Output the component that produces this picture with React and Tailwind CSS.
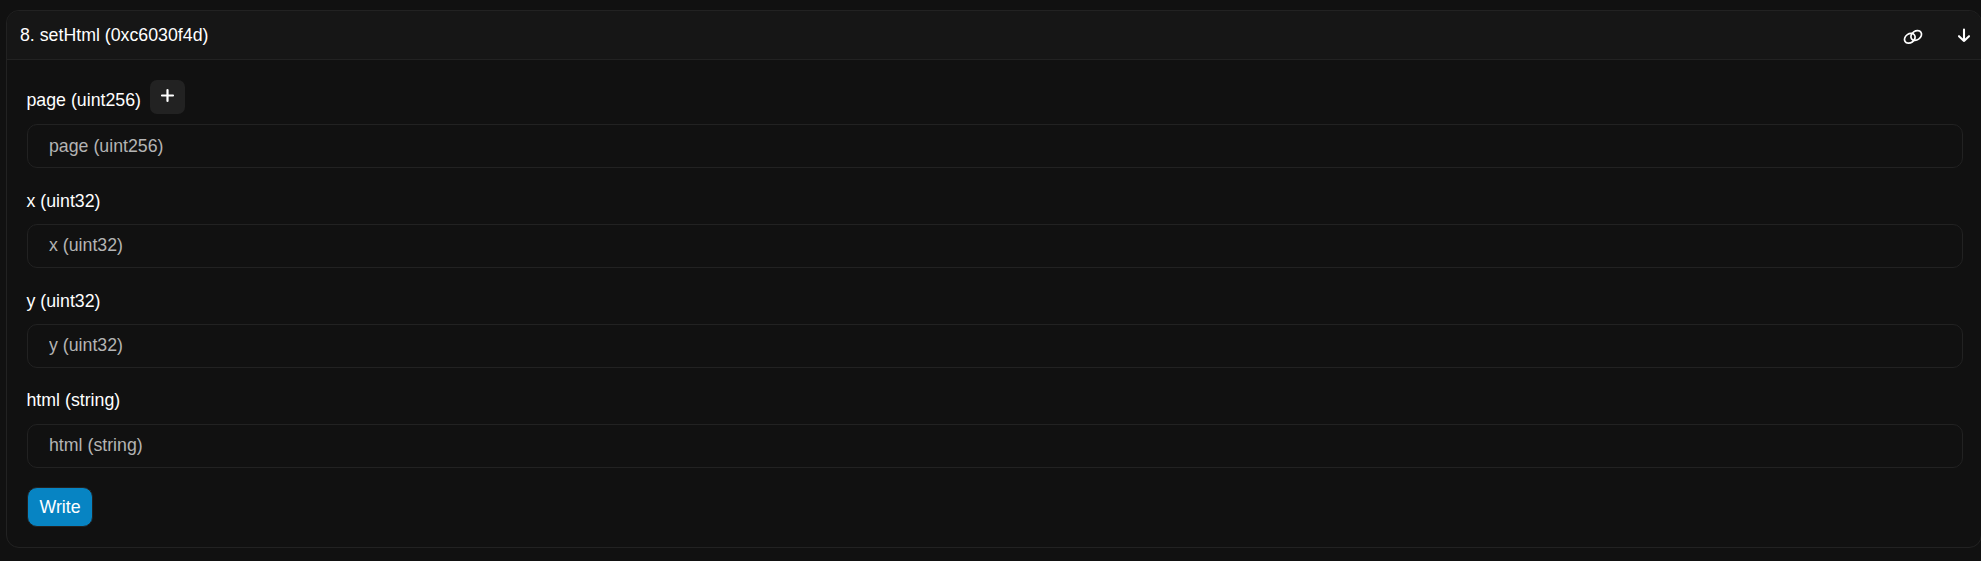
const fields = [
  { name: "page (uint256)", expandable: true, labelClass: "pt-[7px]", inputClass: "pb-0" },
  { name: "x (uint32)", labelClass: "pt-[4px]", inputClass: "pb-[2px]" },
  { name: "y (uint32)", labelClass: "pt-[4px]", inputClass: "pb-[2px]" },
  { name: "html (string)", labelClass: "pt-[3px]", inputClass: "pb-[2px]" },
];

function LinkIcon() {
  return (
    <svg className="mt-[4px]" width="20" height="16" viewBox="0 0 20 16" fill="none" stroke="#fff" strokeWidth="1.7">
      <ellipse cx="6.8" cy="9.3" rx="5.7" ry="4.4" transform="rotate(-34 6.8 9.3)" />
      <ellipse cx="13.2" cy="6.5" rx="5.7" ry="4.4" transform="rotate(-34 13.2 6.5)" />
    </svg>
  );
}

function ArrowDownIcon() {
  return (
    <svg className="mt-px" width="14" height="15" viewBox="0 0 14 15" fill="none" stroke="#fff" strokeWidth="2.1" strokeLinecap="round" strokeLinejoin="round">
      <path d="M7 1.5V13M2 8.2L7 13L12 8.2" />
    </svg>
  );
}

function Field({ name, expandable, labelClass, inputClass }) {
  return (
    <div className="mb-4 flex flex-col">
      <div className={expandable ? "mb-2.5 flex h-[34px] items-start" : "mb-2.5 flex h-[30px] items-start"}>
        <label className={`-ml-[0.5px] w-[123px] ${labelClass}`}>{name}</label>
        {expandable && (
          <button aria-label="Add" className="ml-[0.5px] flex h-[34px] w-[35px] items-center justify-center rounded-[7px] bg-[#222]">
            <svg width="15" height="15" viewBox="0 0 15 15" className="-mt-[3px]" stroke="#fff" strokeWidth="2.2" strokeLinecap="round">
              <path d="M7.5 2V13M2 7.5H13" />
            </svg>
          </button>
        )}
      </div>
      <input
        placeholder={name}
        className={`h-11 w-full rounded-[10px] border border-[#222] bg-[#111] px-[21px] outline-none placeholder:text-[#b4b4b4] ${inputClass}`}
      />
    </div>
  );
}

export default function App() {
  return (
    <div className="h-[561px] w-[1981px] overflow-hidden bg-[#111] pl-1.5 pt-2.5 font-['Liberation_Sans',Arial,sans-serif] text-[17.75px] leading-[26px] text-white">
      <section className="h-[538px] w-[1976px] overflow-hidden rounded-[13px] border border-[#222]">
        <header className="flex h-[49px] items-center justify-between border-b border-[#222] bg-[#161616] pl-[13px] pr-[10px]">
          <h2 className="pb-px">8. setHtml (0xc6030f4d)</h2>
          <div className="flex items-center gap-[34px]">
            <LinkIcon />
            <ArrowDownIcon />
          </div>
        </header>
        <div className="w-[1956px] pl-5 pt-5">
          {fields.map((f) => (
            <Field key={f.name} {...f} />
          ))}
          <button className="mt-[19px] flex h-10 w-[66px] items-center justify-center rounded-[10px] border border-[#222] bg-[#0784c3]">Write</button>
        </div>
      </section>
    </div>
  );
}
